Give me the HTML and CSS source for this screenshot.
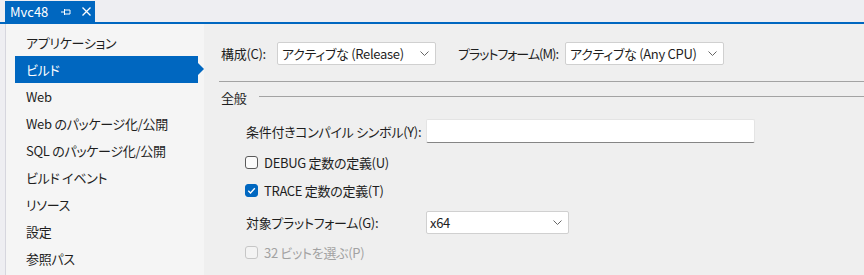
FILE: index.html
```html
<!DOCTYPE html>
<html lang="ja">
<head>
  <meta charset="UTF-8" />
  <title>Mvc48 - ビルド</title>
  <link rel="stylesheet" href="styles.css">
</head>
<body>
  <div class="tabbar">
    <div class="tab">
      <span class="tab-title">Mvc48</span>
      <svg class="tab-pin" width="10" height="8" viewBox="0 0 10 8">
        <path d="M0 4H3.5M3.5 1V7M4 2H9V6H4" fill="none" stroke="#fff" stroke-width="1" />
      </svg>
      <svg class="tab-close" width="9" height="9" viewBox="0 0 9 9">
        <path d="M0.5 0.5L8.5 8.5M8.5 0.5L0.5 8.5" stroke="#fff" stroke-width="1.3" />
      </svg>
    </div>
  </div>

  <div class="panel">
    <ul class="nav">
      <li>アプリケーション</li>
      <li class="active">ビルド</li>
      <li>Web</li>
      <li>Web のパッケージ化/公開</li>
      <li>SQL のパッケージ化/公開</li>
      <li>ビルド イベント</li>
      <li>リソース</li>
      <li>設定</li>
      <li>参照パス</li>
    </ul>

    <div class="page">
      <div class="config-row">
        <label class="config-label">構成(C):</label>
        <div class="combo combo-config">
          <span>アクティブな (Release)</span>
          <svg class="chevron" width="9" height="5" viewBox="0 0 9 5"><path d="M0.5 0.5L4.5 4.5L8.5 0.5" fill="none" stroke="#666" /></svg>
        </div>
        <label class="platform-label">プラットフォーム(M):</label>
        <div class="combo combo-config">
          <span>アクティブな (Any CPU)</span>
          <svg class="chevron" width="9" height="5" viewBox="0 0 9 5"><path d="M0.5 0.5L4.5 4.5L8.5 0.5" fill="none" stroke="#666" /></svg>
        </div>
      </div>

      <div class="rule"></div>

      <div class="section-head"><span>全般</span></div>

      <div class="section-body">
        <div class="field">
          <label class="field-label">条件付きコンパイル シンボル(Y):</label>
          <div class="textbox"></div>
        </div>

        <div class="check check-debug">
          <span class="box"></span>
          <span>DEBUG 定数の定義(U)</span>
        </div>

        <div class="check check-trace">
          <span class="box checked">
            <svg width="11" height="11" viewBox="0 0 11 11"><path d="M2.3 5.8L4.5 8L8.8 3.2" fill="none" stroke="#fff" stroke-width="1.3" /></svg>
          </span>
          <span>TRACE 定数の定義(T)</span>
        </div>

        <div class="field field-target">
          <label class="field-label">対象プラットフォーム(G):</label>
          <div class="combo combo-target">
            <span>x64</span>
            <svg class="chevron" width="9" height="5" viewBox="0 0 9 5"><path d="M0.5 0.5L4.5 4.5L8.5 0.5" fill="none" stroke="#666" /></svg>
          </div>
        </div>

        <div class="check check-32 disabled">
          <span class="box"></span>
          <span>32 ビットを選ぶ(P)</span>
        </div>
      </div>
    </div>
  </div>
</body>
</html>
```

FILE: styles.css
```css
body {
  margin: 0;
  height: 275px;
  overflow: hidden;
  background: #eeeef2;
  color: #1e1e1e;
  font-family: "Noto Sans CJK JP", sans-serif;
  font-size: 13px;
  font-feature-settings: "palt", "pkna";
  letter-spacing: -0.3px;
}

/* document tab strip */
.tabbar {
  height: 22px;
  padding-left: 5px;
  display: flex;
  align-items: flex-end;
  border-bottom: 2px solid #0067c0;
}
.tab {
  width: 85px;
  height: 21px;
  padding-left: 5px;
  display: flex;
  align-items: center;
  background: #0067c0;
  color: #fff;
}
.tab-title { line-height: 21px; letter-spacing: 0; }
.tab-pin { margin-left: 13px; }
.tab-close { margin-left: 11px; }

/* body of the property page */
.panel {
  display: flex;
  height: 251px;
  margin-left: 5px;
  border-left: 1px solid #d6d6de;
}

.nav {
  width: 198px;
  margin: 0;
  padding: 5px 0 0;
  list-style: none;
  background: #f5f5f5;
}
.nav li {
  height: 27px;
  line-height: 27px;
  padding-left: 20px;
  white-space: nowrap;
}
.nav li.active {
  position: relative;
  margin: 0 6px 0 9px;
  padding-left: 11px;
  background: #0067c0;
  color: #fff;
}
.nav li.active::after {
  content: "";
  position: absolute;
  right: -6px;
  top: 7px;
  border-left: 6px solid #0067c0;
  border-top: 6.5px solid transparent;
  border-bottom: 6.5px solid transparent;
}

.page {
  flex: 1;
  min-width: 0;
  padding-left: 15px;
  background: #efefef;
}

.config-row {
  display: flex;
  align-items: center;
  height: 23px;
  margin-top: 18px;
  white-space: nowrap;
}
.config-label { flex: none; width: 58px; padding-left: 2px; box-sizing: border-box; }
.platform-label { flex: none; width: 108px; margin-left: 21px; padding-left: 1px; box-sizing: border-box; letter-spacing: -1px; }

.combo {
  flex: none;
  display: flex;
  align-items: center;
  justify-content: space-between;
  box-sizing: border-box;
  height: 23px;
  padding: 0 6px 0 4px;
  background: #fff;
  border: 1px solid #d0d0d0;
  border-radius: 2px;
  white-space: nowrap;
}
.combo-config { width: 159px; }
.combo-target { width: 143px; padding-left: 3px; }

.rule {
  height: 1px;
  margin-top: 16px;
  background: #a3a3a3;
}

.section-head {
  display: flex;
  align-items: center;
  height: 20px;
  margin-top: 5px;
  padding-left: 2px;
}
.section-head::after {
  content: "";
  flex: 1;
  height: 1px;
  margin-left: 13px;
  margin-top: -1px;
  background: #a3a3a3;
}

.section-body { padding-left: 26px; }

.field {
  display: flex;
  align-items: center;
  margin-top: 12px;
}
.field-label { flex: none; width: 181px; padding-left: 1px; box-sizing: border-box; white-space: nowrap; }
.textbox {
  flex: none;
  width: 329px;
  height: 24px;
  box-sizing: border-box;
  background: #fff;
  border: 1px solid #e4e4e4;
  border-bottom-color: #858585;
  border-radius: 2px;
}
.field-target { margin-top: 10px; }

.check {
  display: flex;
  align-items: center;
  height: 22px;
}
.check-debug { margin-top: 8px; }
.check-trace { margin-top: 6px; }
.check-32 { margin-top: 7px; }

.box {
  display: flex;
  align-items: center;
  justify-content: center;
  width: 13px;
  height: 13px;
  margin-right: 6px;
  box-sizing: border-box;
  border: 1px solid #5a5a5a;
  border-radius: 3px;
  background: #fbfbfb;
}
.box.checked {
  background: #0067c0;
  border-color: #0067c0;
}
.disabled { color: #a2a2a2; }
.disabled .box {
  border-color: #c6c6c6;
  background: #f3f3f3;
}
```
